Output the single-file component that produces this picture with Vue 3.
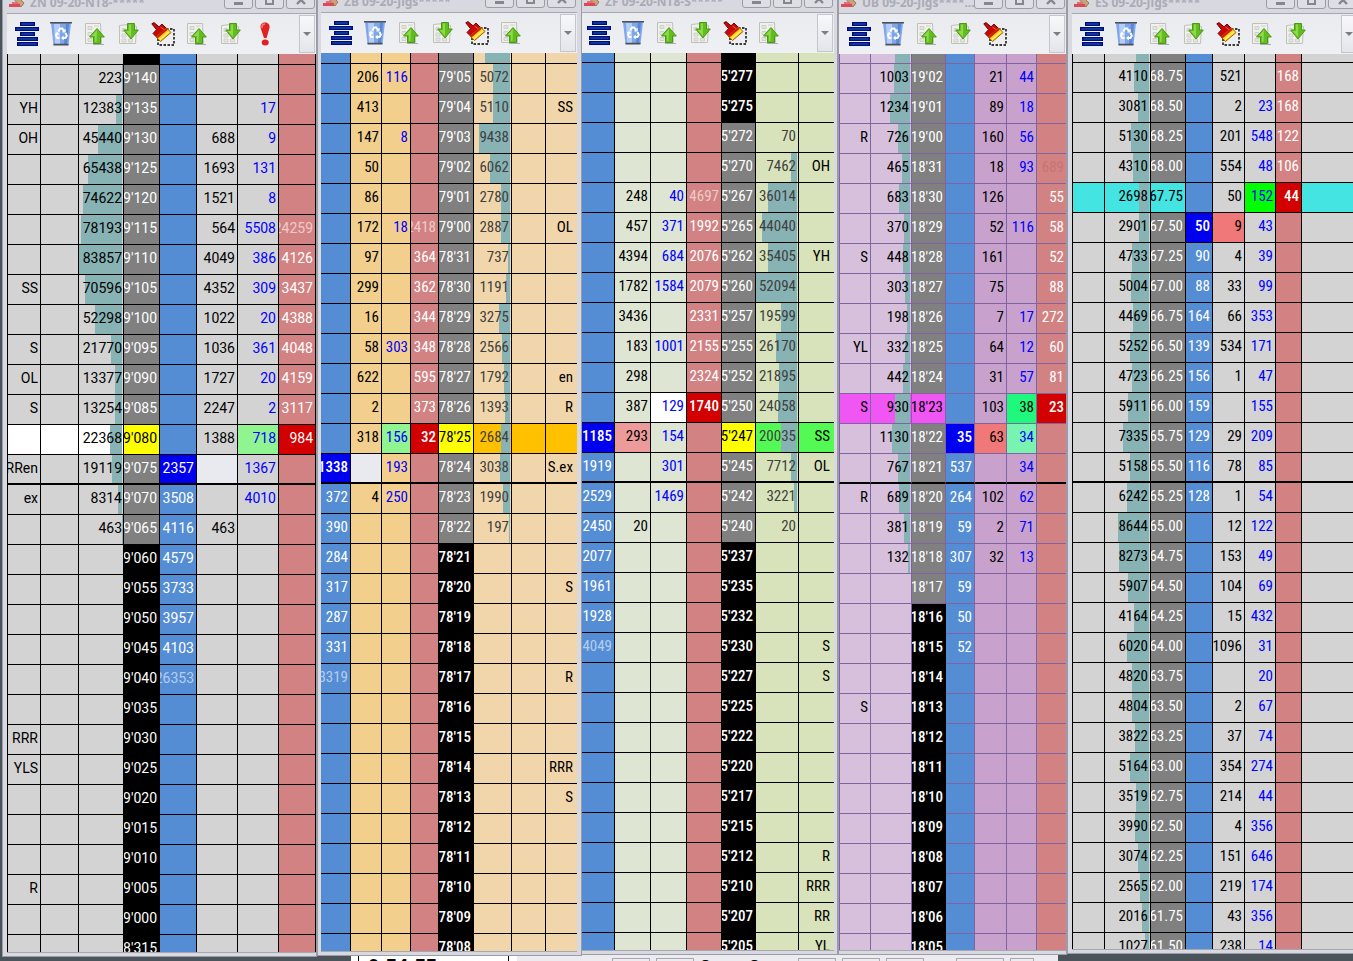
<template>
  <main class="desktop">
    <section v-for="w in windows" :key="w.id" :class="['window', w.id]">
      <header class="titlebar">
        <svg class="app-icon" width="18" height="16" viewBox="0 0 18 16">
          <path d="M6 0l10 10-3 4L3 3z" fill="#c9a27c" stroke="#9b7b5c" />
          <path d="M1 11h11v3H1z" fill="#dc4a58" />
          <path d="M4 9h6v2H4z" fill="#e2707a" />
        </svg>
        <span class="title">{{ w.title }}</span>
        <div class="controls">
          <button aria-label="Minimize"><i class="min"></i></button>
          <button aria-label="Maximize"><i class="max"></i></button>
          <button aria-label="Close">
            <svg width="10" height="10" viewBox="0 0 10 10"><path d="M1 1l8 8M9 1L1 9" stroke="#85868f" stroke-width="2.4" /></svg>
          </button>
        </div>
      </header>

      <div class="toolbar">
        <button v-for="(icon, i) in w.tools" :key="i" class="tool" :aria-label="icon">
          <svg v-if="icon === 'center'" width="24" height="24" viewBox="0 0 24 24" fill="#1763c4" stroke="#000d78" stroke-width="1.4">
            <path d="M5.7 .7h13.6v2.6H5.7zM.7 5.7h22.6v2.6H.7zM5.7 10.7h13.6v2.6H5.7zM2.7 15.7h19.6v2.6H2.7zM2.7 20.7h19.6v2.6H2.7z" />
          </svg>
          <svg v-else-if="icon === 'recycle'" width="24" height="24" viewBox="0 0 24 24">
            <path d="M2 1h20l-2.5 22h-15z" fill="#7fa6e8" />
            <path d="M5 2h6v20H6z" fill="#b4cdf6" />
            <path d="M17 2h3l-2 20h-3z" fill="#5c87d6" />
            <path d="M1 .8h22M4.5 22.6h15" stroke="#4c4f58" stroke-width="1.6" />
            <g fill="none" stroke="#fff" stroke-width="2">
              <path d="M9.2 9.5l2-3h2l2 3M16.5 11l1.3 2.8-1.3 2.2h-3M10.5 16H8.2L7 13.6l1.4-2.4" />
              <path d="M13.5 9.8h2.6V7M14.6 14.4L13 16l1.6 1.6M6.3 11.8l2-1 1.2 2" stroke-width="1.2" />
            </g>
          </svg>
          <svg v-else-if="icon === 'up'" width="24" height="24" viewBox="0 0 24 24">
            <path d="M2.5 1.5h15l1 20h-16z" fill="#f0f1ec" stroke="#bfc0bc" />
            <path d="M5 4.5h4v3H5zM5 10.5h4v3H5zM5 16.5h4v3H5zM11 4h5" fill="#e4e5e0" stroke="#cfd0cb" />
            <path d="M14 6.5l7.3 8.5h-3.8v6.5h-7V15h-4z" fill="#63bd1c" stroke="#4a9a18" />
            <path d="M14 8l-5.5 6H12v6h1.5z" fill="#8ed94c" />
            <path d="M10 22.5h11" stroke="#a9aba6" />
          </svg>
          <svg v-else-if="icon === 'down'" width="24" height="24" viewBox="0 0 24 24">
            <path d="M2.5 3.5l9-1 8 2-1 17h-16z" fill="#f0f1ec" stroke="#bfc0bc" />
            <path d="M5 6.5h3v3H5zM5 12h4v3H5zM5 17h4v3H5zM11.5 17h4v3h-4z" fill="#e4e5e0" stroke="#cfd0cb" />
            <path d="M10.5 1.5h7V8h3.8L14 17 6.7 8h3.8z" fill="#63bd1c" stroke="#4a9a18" />
            <path d="M12 2.5h2V15L8.5 9H12z" fill="#8ed94c" />
          </svg>
          <svg v-else-if="icon === 'brush'" width="24" height="24" viewBox="0 0 24 24">
            <path d="M7 7h16v16H7z" fill="none" stroke="#000" stroke-width="1.4" stroke-dasharray="2.5 1.5" />
            <path d="M.8 1.800L3 .6l5 4.200 3-2.800 4.500 4.500L6 15.500l-4-4 3.500-3.800z" fill="#c80808" stroke="#6c0808" />
            <path d="M9.500 5l4 3" stroke="#ff5a4a" />
            <path d="M15.500 6l4.500 4.500L9.500 19.500 5 15z" fill="#ffd60a" stroke="#a85808" />
            <path d="M16 7L6 15.500" stroke="#d41408" stroke-width="2" />
            <path d="M18 9.500l-9 8" stroke="#fff28a" stroke-width="1.200" />
          </svg>
          <svg v-else width="24" height="24" viewBox="0 0 24 24">
            <path d="M12 .5c3.500 0 5 2.500 4.500 5.500L13.600 16H11L7.600 6C7 3 8.500.5 12 .5z" fill="#e02222" />
            <path d="M9 6c-.5-2.500 1-4 3-4" fill="none" stroke="#f68080" stroke-width="1.500" />
            <ellipse cx="12.200" cy="20.500" rx="3.500" ry="3" fill="#e02222" />
          </svg>
        </button>
        <button class="more" aria-label="More"></button>
      </div>

      <div class="ladder">
        <table>
          <colgroup>
            <col v-for="(c, i) in w.cols" :key="i" :style="{ width: c[1] + 'px' }" />
          </colgroup>
          <tbody>
            <tr v-for="(row, r) in w.rows" :key="r" :class="{ part: r === 0, split: r === w.split }">
              <td v-for="(cell, i) in row" :key="i" :class="[w.cols[i][0], cell.mark]">
                <div class="cell">
                  <span v-if="cell.bar" class="bar" :style="{ width: cell.bar + '%' }"></span>
                  <span class="value">{{ cell.text }}</span>
                </div>
              </td>
            </tr>
          </tbody>
        </table>
      </div>
    </section>

    <footer class="behind">
      <div class="clock">0:54:55</div>
      <div class="panel">
        <span class="stub"></span><span class="stub"></span><b>O</b><b>O</b><span class="stub"></span>
        <span class="stub"></span><span class="stub"></span><span class="stub wide"></span><span class="stub small"></span>
      </div>
    </footer>
  </main>
</template>

<script setup>
// one line per price level, cells split by comma, "text:mark" highlights a cell
const zn = `
,,,:off,,,,
,,223,9'140,,,,
YH,,12383,9'135,,,17,
OH,,45440,9'130,,688,9,
,,65438,9'125,,1693,131,
,,74622,9'120,,1521,8,
,,78193,9'115,,564,5508,24259:faint
,,83857,9'110,,4049,386,4126
SS,,70596,9'105,,4352,309,3437
,,52298,9'100,,1022,20,4388
S,,21770,9'095,,1036,361,4048
OL,,13377,9'090,,1727,20,4159
S,,13254,9'085,,2247,2,3117
:white,:white,22368:white,9'080:yellow,,1388,718:mint,984:red
RRen,,19119,9'075,2357:blue,:pale,1367,
ex,,8314,9'070,3508,,4010,
,,463,9'065,4116,463,,
,,,9'060:off,4579,,,
,,,9'055:off,3733,,,
,,,9'050:off,3957,,,
,,,9'045:off,4103,,,
,,,9'040:off,26353:faint,,,
,,,9'035:off,,,,
RRR,,,9'030:off,,,,
YLS,,,9'025:off,,,,
,,,9'020:off,,,,
,,,9'015:off,,,,
,,,9'010:off,,,,
R,,,9'005:off,,,,
,,,9'000:off,,,,
,,,8'315:off,,,,`

const zb = `
,,,,,,,
,206,116,,.79'05,5072,,
,413,,,.79'04,5110,,SS
,147,8,,.79'03,9438,,
,50,,,.79'02,6062,,
,86,,,.79'01,2780,,
,172,18,2418:faint,.79'00,2887,,OL
,97,,364,.78'31,737,,
,299,,362,.78'30,1191,,
,16,,344,.78'29,3275,,
,58,303,348,.78'28,2566,,
,622,,595,.78'27,1792,,en
,2,,373,.78'26,1393,,R
,318,156:mint,32:red,.78'25:yellow,2684:amber,:amber,:amber
1338:blue,:pale,193,,.78'24,3038,,S.ex
372,4,250,,.78'23,1990,,
390,,,,.78'22,197,,
284,,,,.78'21:off,,,
317,,,,.78'20:off,,,S
287,,,,.78'19:off,,,
331,,,,.78'18:off,,,
3319:faint,,,,.78'17:off,,,R
,,,,.78'16:off,,,
,,,,.78'15:off,,,
,,,,.78'14:off,,,RRR
,,,,.78'13:off,,,S
,,,,.78'12:off,,,
,,,,.78'11:off,,,
,,,,.78'10:off,,,
,,,,.78'09:off,,,
,,,,.78'08:off,,,`

const zf = `
,,,,:off,,
,,,,5'277:off,,
,,,,5'275:off,,
,,,,5'272,70,
,,,,5'270,7462,OH
,248,40,14697:faint,5'267,36014,
,457,371,1992,5'265,44040,
,4394,684,2076,5'262,35405,YH
,1782,1584,2079,5'260,52094,
,3436,,2331,5'257,19599,
,183,1001,2155,5'255,26170,
,298,,2324,5'252,21895,
,387,129:white,1740:red,5'250,24058,
1185:blue,293:rose,154,,5'247:yellow,20035:green,SS:green
1919,,301,,5'245,7712,OL
2529,,1469,,5'242,3221,
2450,20,,,5'240,20,
2077,,,,5'237:off,,
1961,,,,5'235:off,,
1928,,,,5'232:off,,
4049:faint,,,,5'230:off,,S
,,,,5'227:off,,S
,,,,5'225:off,,
,,,,5'222:off,,
,,,,5'220:off,,
,,,,5'217:off,,
,,,,5'215:off,,
,,,,5'212:off,,R
,,,,5'210:off,,RRR
,,,,5'207:off,,RR
,,,,5'205:off,,YL`

const ub = `
,,,,,,
,1003,19'02,,21,44,
,1234,19'01,,89,18,
R,726,19'00,,160,56,
,465,18'31,,18,93,689:ghost
,683,18'30,,126,,55
,370,18'29,,52,116,58
S,448,18'28,,161,,52
,303,18'27,,75,,88
,198,18'26,,7,17,272
YL,332,18'25,,64,12,60
,442,18'24,,31,57,81
S:magenta,930:magenta,18'23:magenta,,103,38:spring,23:red
,1130,18'22,35:blue,63:coral,34:aqua,
,767,18'21,537,,34,
R,689,18'20,264,102,62,
,381,18'19,59,2,71,
,132,18'18,307,32,13,
,,18'17,59,,,
,,18'16:off,50,,,
,,18'15:off,52,,,
,,18'14:off,,,,
S,,18'13:off,,,,
,,18'12:off,,,,
,,18'11:off,,,,
,,18'10:off,,,,
,,18'09:off,,,,
,,18'08:off,,,,
,,18'07:off,,,,
,,18'06:off,,,,
,,18'05:off,,,,`

const es = `
,,,,,,,
,4110,68.75,,521,,168,
,3081,68.50,,2,23,168,
,5130,68.25,,201,548,122,
,4310,68.00,,554,48,106,
:cyan,2698:cyan,67.75:cyan,,50,152:lime,44:red,:cyan
,2901,67.50,50:blue,9:coral,43,,
,4733,67.25,90,4,39,,
,5004,67.00,88,33,99,,
,4469,66.75,164,66,353,,
,5252,66.50,139,534,171,,
,4723,66.25,156,1,47,,
,5911,66.00,159,,155,,
,7335,65.75,129,29,209,,
,5158,65.50,116,78,85,,
,6242,65.25,128,1,54,,
,8644,65.00,,12,122,,
,8273,64.75,,153,49,,
,5907,64.50,,104,69,,
,4164,64.25,,15,432,,
,6020,64.00,,1096,31,,
,4820,63.75,,,20,,
,4804,63.50,,2,67,,
,3822,63.25,,37,74,,
,5164,63.00,,354,274,,
,3519,62.75,,214,44,,
,3990,62.50,,4,356,,
,3074,62.25,,151,646,,
,2565,62.00,,219,174,,
,2016,61.75,,43,356,,
,1027,61.50,,238,14,,`

// full = volume that fills the whole cell, first = volume of the cut-off top row
function parse(src, cols, full, first) {
  return src.trim().split('\n').map((line, r) => line.split(',').map((part, i) => {
    const [text, mark] = part.split(':')
    const volume = r === 0 ? first : Number(text)
    return { text, mark, bar: cols[i][0].startsWith('vol') ? Math.min(100, volume / full * 100) : 0 }
  }))
}

function ladder(id, title, tools, cols, src, full, first) {
  return { id, title, tools, cols, split: 14, rows: parse(src, cols, full, first) }
}

const base = ['center', 'recycle', 'up', 'down', 'brush']

const windows = [
  ladder('zn', 'ZN 09-20-NT8-*****', [...base, 'up', 'down', 'alert'],
    [['side', 34], ['side', 38], ['vol', 45], ['price', 36], ['bid', 37], ['trade', 41], ['trade buy', 41], ['ask', 37]], zn, 84000, 0),
  ladder('zb', 'ZB 09-20-Jigs*****', [...base, 'up'],
    [['bid', 30], ['trade', 31], ['trade buy', 29], ['ask', 28], ['price', 35], ['vol dim', 38], ['side', 34], ['side', 32]], zb, 11260, 7600),
  ladder('zf', 'ZF 09-20-NT8-S*****', [...base, 'up'],
    [['bid', 33], ['trade', 36], ['trade buy', 36], ['ask', 35], ['price', 34], ['vol dim', 43], ['side', 36]], zf, 52100, 0),
  ladder('ub', 'UB 09-20-Jigs****...', base,
    [['side', 32], ['vol', 41], ['price', 34], ['bid', 29], ['trade', 32], ['trade buy', 30], ['ask', 30]], ub, 2470, 930),
  ladder('es', 'ES 09-20-Jigs*****', [...base, 'up', 'down'],
    [['side', 33], ['vol', 46], ['price', 35], ['bid', 27], ['trade', 32], ['trade buy', 31], ['ask', 26], ['side', 56]], es, 12500, 3600),
]
</script>

<style>
body { margin: 0; overflow: hidden; background: #4b545a; }
</style>

<style scoped>
* { box-sizing: border-box; }
.desktop {
  position: relative;
  display: grid;
  grid-template-columns: 315fr 265fr 256fr 229fr 291fr;
  grid-template-rows: 100%;
  width: calc(100% + 5px);
  height: 100vh;
  padding-left: 2px;
  font-family: "Liberation Sans Narrow", "Roboto Condensed", Roboto, sans-serif;
  font-size: 15px;
  background: #4b545a;
}
.window {
  --line: #000;
  --row0: 9px;
  position: relative;
  z-index: 1;
  display: flex;
  flex-direction: column;
  min-width: 0;
  padding-bottom: 3px;
  background: #d8d8e0;
  border: 1px solid #9c9ca6;
  border-top: 0;
}
.zn { margin-bottom: 4px; padding-left: 4px; --row0: 11px; --side: #d3d3d3; --trade: #d3d3d3; font-family: Roboto, sans-serif; font-size: 14px; }
.zb { margin-bottom: 5px; padding: 0 4px 3px 3px; --row0: 11px; --side: #f2d6ab; --trade: #f2cf8c; }
.zf { margin-bottom: 6px; padding-right: 3px; border-left: 0; --row0: 10px; --side: #d8e3bb; --trade: #dee5d3; }
.ub { margin-bottom: 6px; --row0: 10px; --side: #d7c0dc; --trade: #c8a2cc; --line: #8064a2; }
.es { margin-bottom: 7px; padding-left: 4px; border-right: 0; --row0: 9px; --side: #d3d3d3; --trade: #d3d3d3; }

.titlebar {
  display: flex;
  align-items: flex-end;
  flex: none;
  height: 14px;
  overflow: hidden;
  border-bottom: 1px solid #a7a7b0;
}
.zb .titlebar, .zf .titlebar { height: 13px; }
.app-icon { flex: none; margin: 0 4px 4px 1px; }
.title {
  flex: 1;
  overflow: hidden;
  white-space: nowrap;
  font: bold 12px/16px "Noto Sans", sans-serif;
  color: #a9abb4;
  margin-bottom: 2px;
}
.controls { display: flex; gap: 2px; margin: 0 1px 4px 0; }
.controls button {
  display: flex;
  align-items: flex-end;
  justify-content: center;
  width: 29px;
  height: 18px;
  padding: 0 0 3px;
  background: #dedee5;
  border: 1px solid #9b9ca6;
  border-radius: 3px;
}
.min { width: 9px; height: 3px; background: #85868f; }
.max { width: 9px; height: 9px; border: 2px solid #85868f; }

.toolbar {
  display: flex;
  flex: none;
  align-items: center;
  gap: 10px;
  height: 40px;
  padding-left: 8px;
  overflow: hidden;
  background: linear-gradient(#eaebef, #eff0f4);
}
.zf .toolbar { padding-left: 5px; }
.tool { flex: none; width: 24px; height: 24px; padding: 0; border: 0; background: none; }
.tool svg { display: block; }
.more {
  flex: none;
  width: 16px;
  height: 38px;
  margin: 0 1px 0 auto;
  padding: 0;
  background: linear-gradient(#f8f8fa, #e4e5ea);
  border: 1px solid #c4c5cd;
}
.more::after {
  content: "";
  display: block;
  margin: 0 auto;
  width: 0;
  border: 4px solid transparent;
  border-top-color: #7c7d86;
  border-bottom: 0;
}

.ladder { flex: 1; min-height: 0; overflow: hidden; border-bottom: 1px solid #a7a7b0; }
table { width: 100%; table-layout: fixed; border-collapse: separate; border-spacing: 0; }
td {
  height: 30px;
  padding: 0;
  background: var(--side);
  border: 0 solid var(--line);
  border-width: 0 1px 1px 0;
}
.zn td:first-child, .es td:first-child, .ub td:first-child { border-left-width: 1px; }
.part td { height: var(--row0); }
.part .cell { height: calc(var(--row0) - 1px); }
.split td { border-bottom: 2px solid #000; }
.split .cell { height: 28px; }
.cell {
  position: relative;
  display: flex;
  justify-content: flex-end;
  height: 29px;
  padding-right: 2px;
  overflow: hidden;
  line-height: 27px;
  white-space: nowrap;
}
.zn .vol .cell { padding-right: 1px; }
.zb .side .cell, .zf .side .cell { padding-right: 4px; }
.value { position: relative; flex: none; }
.bar {
  position: absolute;
  top: 0;
  bottom: 0;
  right: 1px;
  background: #87b3b5;
}

.trade { background: var(--trade); }
.buy { color: #0000ff; }
.dim { color: #404040; }
.bid { background: #548dd4; color: #fff; }
.ask { background: #d28282; color: #fff; }
.price { background: #808080; color: #fff; }
.faint { color: #efcaca; }
.bid.faint { color: #b4cdf0; }
.ghost { color: #c87474; }
.off { background: #000; border-right-color: #000; border-bottom-color: #000; }
.white { background: #fff; }
.pale { background: #e9eaef; }
.yellow { background: #ff0; color: #000; }
.mint { background: #90f490; }
.red { background: #d20000; }
.blue { background: #0000f0; }
.amber { background: #ffc000; }
.rose { background: #ec9a9a; }
.green { background: #54fa54; }
.magenta { background: #f056f4; color: #000; }
.spring { background: #1ef87c; color: #000; }
.coral { background: #f07878; }
.aqua { background: #78f4b0; }
.cyan { background: #44e4e2; color: #000; }
.lime { background: #0f0; }
.off, .red, .blue { font-weight: 500; }
.zn .off, .zn .red, .zn .blue { font-weight: 400; }

.behind {
  position: absolute;
  left: 351px;
  right: 300px;
  bottom: 0;
  display: flex;
  height: 6px;
  overflow: hidden;
  background: #fff;
}
.clock {
  width: 151px;
  margin: 0 8px 0 7px;
  padding: 1px 0 0 9px;
  border: 1px solid #000;
  border-width: 0 1px;
  font: bold 20px/20px "Liberation Sans", sans-serif;
}
.panel {
  display: flex;
  flex: 1;
  gap: 6px;
  padding: 3px 24px 0 95px;
  background: #ebebf0;
  font: 14px/14px "Liberation Sans", sans-serif;
}
.panel b { width: 43px; }
.stub { flex: 1; border: 1px solid #a7a7b0; height: 10px; }
.wide { flex: 1.3; margin-left: 26px; }
.small { flex: .6; }
</style>
